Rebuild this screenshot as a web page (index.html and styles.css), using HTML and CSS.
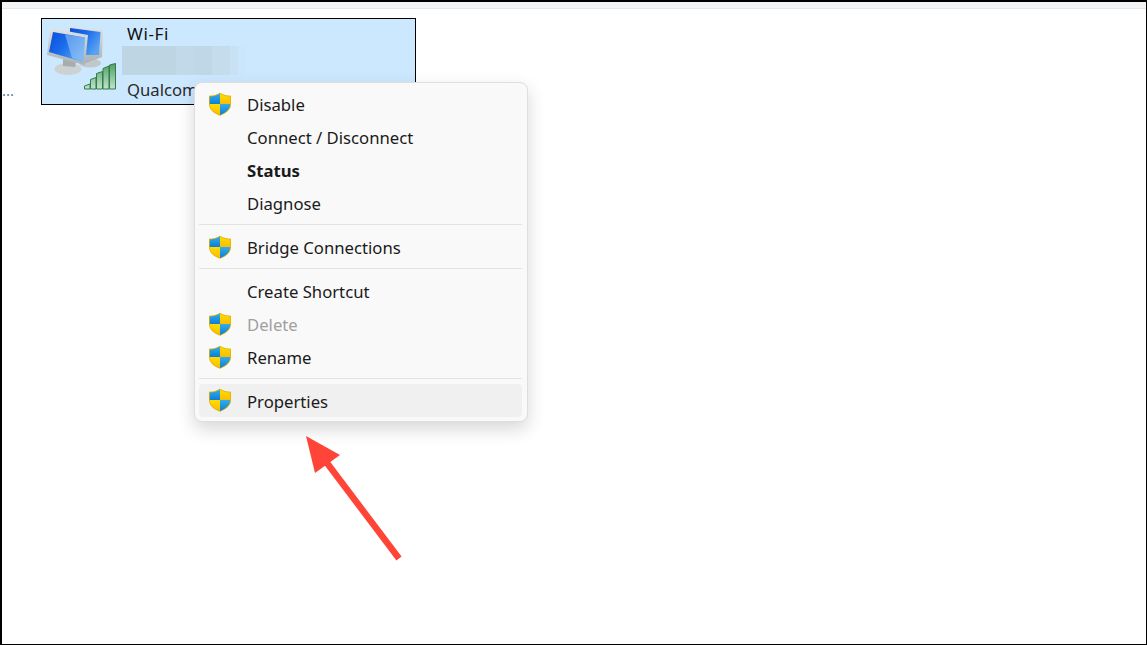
FILE: index.html
```html
<!DOCTYPE html>
<html>
<head>
  <meta charset="utf-8">
  <title>Network Connections</title>
  <link rel="stylesheet" href="styles.css">
</head>
<body>
  <svg class="defs" width="0" height="0">
    <defs>
      <linearGradient id="shieldBlue" x1="0" y1="0" x2="0" y2="1">
        <stop offset="0" stop-color="#35ace9"/>
        <stop offset="1" stop-color="#0b7fd8"/>
      </linearGradient>
      <linearGradient id="shieldYellow" x1="0" y1="0" x2="0" y2="1">
        <stop offset="0" stop-color="#ffdc00"/>
        <stop offset="1" stop-color="#f9bd00"/>
      </linearGradient>
      <linearGradient id="screen" x1="0" y1="0" x2="1" y2="0.6">
        <stop offset="0" stop-color="#0a4ddc"/>
        <stop offset="0.5" stop-color="#1c6cec"/>
        <stop offset="1" stop-color="#58a4f2"/>
      </linearGradient>
      <linearGradient id="bezel" x1="0" y1="0" x2="0" y2="1">
        <stop offset="0" stop-color="#dfe4e6"/>
        <stop offset="1" stop-color="#aab2b5"/>
      </linearGradient>
      <linearGradient id="bar" x1="0" y1="0" x2="0" y2="1">
        <stop offset="0" stop-color="#4f9f68"/>
        <stop offset="1" stop-color="#c3e3cc"/>
      </linearGradient>
      <symbol id="shield" viewBox="0 0 24 24">
        <path d="M12 .8C9 2.800 5.500 3.600 1 3.800V12C1 17.800 6 21.300 12 23.800C18 21.300 23 17.800 23 12V3.800C18.500 3.600 15 2.800 12 .8Z" fill="#e2b100"/>
        <path d="M12 1.500C9 3.500 5.800 4.300 1.800 4.500V12H12Z" fill="url(#shieldBlue)"/>
        <path d="M12 1.500C15 3.500 18.200 4.300 22.200 4.500V12H12Z" fill="url(#shieldYellow)"/>
        <path d="M1.800 12H12V23C6.500 20.700 1.800 17.300 1.800 12Z" fill="url(#shieldYellow)"/>
        <path d="M22.200 12H12V23C17.500 20.700 22.200 17.300 22.200 12Z" fill="url(#shieldBlue)"/>
      </symbol>
    </defs>
  </svg>

  <div class="frame">
    <div class="toolbar"></div>
    <div class="content">
      <div class="more">...</div>
      <div class="adapter">
        <svg class="adapter-icon" width="72" height="66" viewBox="0 0 72 66">
          <ellipse cx="44" cy="38" rx="11" ry="4.500" fill="#c2c8c9"/>
          <path d="M22 1L57 5L56 32L40 38L22 32Z" fill="url(#bezel)"/>
          <path d="M24 3L54.500 7L53 30L24 30Z" fill="url(#screen)"/>
          <ellipse cx="22" cy="44" rx="13.500" ry="6" fill="#cdd1d2"/>
          <path d="M17 33L30 37L29 42L17 41Z" fill="#a6adaf"/>
          <path d="M4 3L42 10L39 40L1 30Z" fill="url(#bezel)"/>
          <path d="M7 7L39 12.500L37 37L3 27Z" fill="url(#screen)"/>
          <path d="M19 9.500L39 12.500L37 37L26 33Z" fill="#9fcaf6" opacity="0.55"/>
          <path d="M38.500 64V61L44 59V64ZM44.500 64V54.500L50 52.500V64ZM50.500 64V48.500L56.500 46.500V64ZM57 64V43.500L63 41V64ZM63.500 64V40L69.500 38.500V64Z" fill="url(#bar)" stroke="#2f7d48" stroke-width="1"/>
        </svg>
        <div class="adapter-text">
          <div class="adapter-name">Wi-Fi</div>
          <div class="adapter-blur"></div>
          <div class="adapter-device">Qualcom</div>
        </div>
      </div>
    </div>
  </div>

  <div class="menu">
    <div class="menu-item"><svg class="shield"><use href="#shield"/></svg>Disable</div>
    <div class="menu-item">Connect / Disconnect</div>
    <div class="menu-item bold">Status</div>
    <div class="menu-item">Diagnose</div>
    <div class="separator"></div>
    <div class="menu-item"><svg class="shield"><use href="#shield"/></svg>Bridge Connections</div>
    <div class="separator"></div>
    <div class="menu-item">Create Shortcut</div>
    <div class="menu-item disabled"><svg class="shield"><use href="#shield"/></svg>Delete</div>
    <div class="menu-item"><svg class="shield"><use href="#shield"/></svg>Rename</div>
    <div class="separator last"></div>
    <div class="menu-item hover"><svg class="shield"><use href="#shield"/></svg>Properties</div>
  </div>

  <svg class="arrow" width="1147" height="645" viewBox="0 0 1147 645">
    <path d="M399 558.500L327 463" stroke="#ff4438" stroke-width="6.500" fill="none"/>
    <path d="M306 436L340 455L315 473Z" fill="#ff4438"/>
  </svg>
</body>
</html>
```

FILE: styles.css
```css
html, body {
  margin: 0;
  padding: 0;
  background-color: #fff;
}
body {
  font-family: "Noto Sans", "Open Sans", sans-serif;
  font-size: 16.7px;
  color: #1a1a1a;
  overflow: hidden;
}
.defs {
  position: absolute;
}
.frame {
  box-sizing: border-box;
  width: 1147px;
  height: 645px;
  border: solid #000;
  border-width: 2px 1px 1px 2px;
  background-color: #fff;
}
.toolbar {
  height: 6px;
  background-color: #f3f4f6;
  border-bottom: 1px solid #e6e7e9;
}
.content {
  display: flex;
  align-items: flex-end;
  gap: 27px;
  padding: 9px 0 0 0;
}
.more {
  width: 12px;
  font-size: 15px;
  line-height: 14px;
  color: #5b7fa6;
  margin-bottom: 8px;
  white-space: nowrap;
}
.adapter {
  box-sizing: border-box;
  display: flex;
  width: 375px;
  height: 87px;
  border: 1px solid #000;
  background-color: #cce8ff;
}
.adapter-icon {
  margin: 6px 0 0 4px;
  flex: none;
}
.adapter-text {
  margin-left: 4px;
  padding-top: 4px;
}
.adapter-name {
  height: 22px;
  line-height: 22px;
  margin-left: 5px;
  font-size: 17px;
  letter-spacing: 0.6px;
  color: #111;
}
.adapter-blur {
  width: 124px;
  height: 29px;
  margin-top: 1px;
  background: linear-gradient(90deg, #bed5e4 0 54px, #c1d9e8 54px 72px, #bfd7e6 72px 90px, #c4dcec 90px 108px, #c8e1f4 108px 116px, #cbe6fb 116px);
}
.adapter-device {
  height: 22px;
  line-height: 22px;
  margin: 4px 0 0 5px;
  color: #2b2b2b;
  white-space: nowrap;
}
.menu {
  position: absolute;
  left: 194px;
  top: 82px;
  box-sizing: border-box;
  width: 334px;
  height: 340px;
  padding: 5px 4px 4px;
  padding-right: 5px;
  background-color: #f9f9f9;
  border: 1px solid #dedede;
  border-radius: 8px;
  box-shadow: 0 7px 18px rgba(0,0,0,0.16);
}
.menu-item {
  position: relative;
  box-sizing: border-box;
  height: 33px;
  line-height: 32px;
  padding: 1px 0 0 48px;
  border-radius: 4px;
  white-space: nowrap;
}
.shield {
  position: absolute;
  left: 9px;
  top: 4px;
  width: 24px;
  height: 24px;
}
.bold {
  font-weight: 700;
}
.disabled {
  color: #a0a0a0;
}
.hover {
  padding-top: 2px;
  background-color: #f0f0f0;
}
.separator {
  height: 1px;
  margin: 4px 0 6px;
  background-color: #e2e2e2;
}
.separator.last {
  margin-bottom: 5px;
}
.arrow {
  position: absolute;
  left: 0;
  top: 0;
  pointer-events: none;
}
```
